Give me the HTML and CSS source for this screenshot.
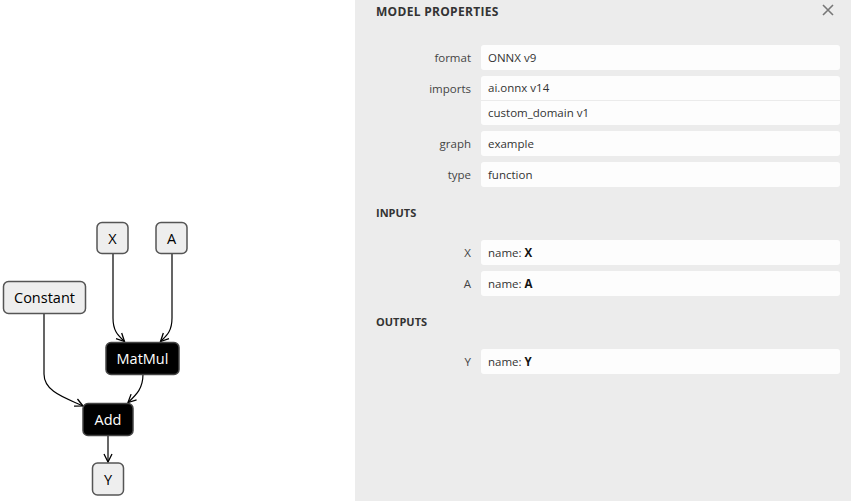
FILE: index.html
```html
<!DOCTYPE html>
<html>
<head>
<meta charset="utf-8">
<link rel="stylesheet" href="styles.css">
</head>
<body>
<div class="app">
  <div class="graph">
    <svg class="graph-svg" width="355" height="501" viewBox="0 0 355 501">
      <defs>
        <marker id="arrow" markerWidth="10" markerHeight="10" refX="9" refY="5" orient="auto" markerUnits="userSpaceOnUse">
          <path d="M1,1 L9,5 L1,9" fill="none" stroke="#000" stroke-width="1.3"/>
        </marker>
      </defs>
      <g class="edges">
        <path d="M113,253 V318 C113,332 119,336 124.5,341.5" marker-end="url(#arrow)"/>
        <path d="M172,253 V318 C172,332 166,336 160.5,341.5" marker-end="url(#arrow)"/>
        <path d="M44,314 V374 C44,392 66,398 83,406" marker-end="url(#arrow)"/>
        <path d="M143,374 C143,389 136,395 128,402.5" marker-end="url(#arrow)"/>
        <path d="M108,435 V462" marker-end="url(#arrow)"/>
      </g>
      <g class="node io">
        <rect x="97" y="222.5" width="31" height="31" rx="5"/>
        <text x="112.5" y="243.5">X</text>
      </g>
      <g class="node io">
        <rect x="156" y="222.5" width="31" height="31" rx="5"/>
        <text x="171.5" y="243.5">A</text>
      </g>
      <g class="node io">
        <rect x="3.5" y="281.5" width="82" height="32" rx="5"/>
        <text x="44.5" y="303">Constant</text>
      </g>
      <g class="node op">
        <rect x="106" y="342.5" width="73" height="32" rx="5"/>
        <text x="142.5" y="364">MatMul</text>
      </g>
      <g class="node op">
        <rect x="83" y="403.5" width="50" height="32" rx="5"/>
        <text x="108" y="425">Add</text>
      </g>
      <g class="node io">
        <rect x="92.5" y="463" width="31" height="32" rx="5"/>
        <text x="108" y="484.5">Y</text>
      </g>
    </svg>
  </div>
  <aside class="panel">
    <div class="panel-header">
      <span class="panel-title">MODEL PROPERTIES</span>
      <button class="close" aria-label="Close">
        <svg width="12" height="12" viewBox="0 0 12 12"><path d="M1,1 L11,11 M11,1 L1,11" stroke="#777" stroke-width="1.6" fill="none"/></svg>
      </button>
    </div>
    <div class="props first">
      <div class="row"><div class="label">format</div><div class="value"><div class="line">ONNX v9</div></div></div>
      <div class="row"><div class="label">imports</div><div class="value"><div class="line multi">ai.onnx v14</div><div class="line multi sep">custom_domain v1</div></div></div>
      <div class="row"><div class="label">graph</div><div class="value"><div class="line">example</div></div></div>
      <div class="row"><div class="label">type</div><div class="value"><div class="line">function</div></div></div>
    </div>
    <div class="section-title">INPUTS</div>
    <div class="props">
      <div class="row"><div class="label">X</div><div class="value"><div class="line">name: <b>X</b></div></div></div>
      <div class="row"><div class="label">A</div><div class="value"><div class="line">name: <b>A</b></div></div></div>
    </div>
    <div class="section-title">OUTPUTS</div>
    <div class="props">
      <div class="row"><div class="label">Y</div><div class="value"><div class="line">name: <b>Y</b></div></div></div>
    </div>
  </aside>
</div>
</body>
</html>
```

FILE: styles.css
```css
* { box-sizing: border-box; }
html, body { margin: 0; padding: 0; background: #fff; }
body {
  font-family: "Open Sans", "Noto Sans", "Liberation Sans", sans-serif;
  width: 851px;
  height: 501px;
  overflow: hidden;
}
.app { display: flex; height: 501px; }
.graph { width: 355px; flex: none; }
.graph-svg { display: block; }
.edges path { fill: none; stroke: #000; stroke-width: 1.2; }
.node rect { stroke-width: 1.5; }
.node text {
  font-family: "Open Sans", "Noto Sans", sans-serif;
  font-size: 14.5px;
  text-anchor: middle;
}
.node.io rect { fill: #eee; stroke: #555; }
.node.io text { fill: #000; }
.node.op rect { fill: #000; stroke: #444; }
.node.op text { fill: #fff; }

.panel {
  flex: 1;
  background: #ececec;
  padding: 0 11px 0 21px;
  color: #333;
}
.panel-header {
  height: 24px;
  display: flex;
  align-items: center;
  justify-content: space-between;
}
.panel-title {
  font-size: 12px;
  font-weight: 700;
  letter-spacing: 0.3px;
  color: #333;
  line-height: 22px;
}
.close {
  border: 0;
  background: none;
  padding: 0;
  margin-right: 6px;
  margin-top: -4px;
  width: 12px;
  height: 12px;
  display: flex;
}
.props { display: flex; flex-direction: column; gap: 6px; }
.props.first { margin-top: 21px; }
.row { display: grid; grid-template-columns: 95px 1fr; column-gap: 10px; }
.label {
  text-align: right;
  font-size: 11.5px;
  line-height: 25px;
  color: #444;
}
.value {
  background: #fdfdfd;
  border-radius: 3px;
  font-size: 11.5px;
  color: #333;
}
.line { padding: 0 7px; line-height: 25px; height: 25px; }
.line.multi { line-height: 24px; height: 24px; }
.line.sep { border-top: 1px solid #ebebeb; height: 25px; }
.value b { font-weight: 700; color: #111; }
.section-title {
  font-size: 11px;
  font-weight: 700;
  color: #333;
  line-height: 20px;
  margin: 16px 0 17px;
}
```
